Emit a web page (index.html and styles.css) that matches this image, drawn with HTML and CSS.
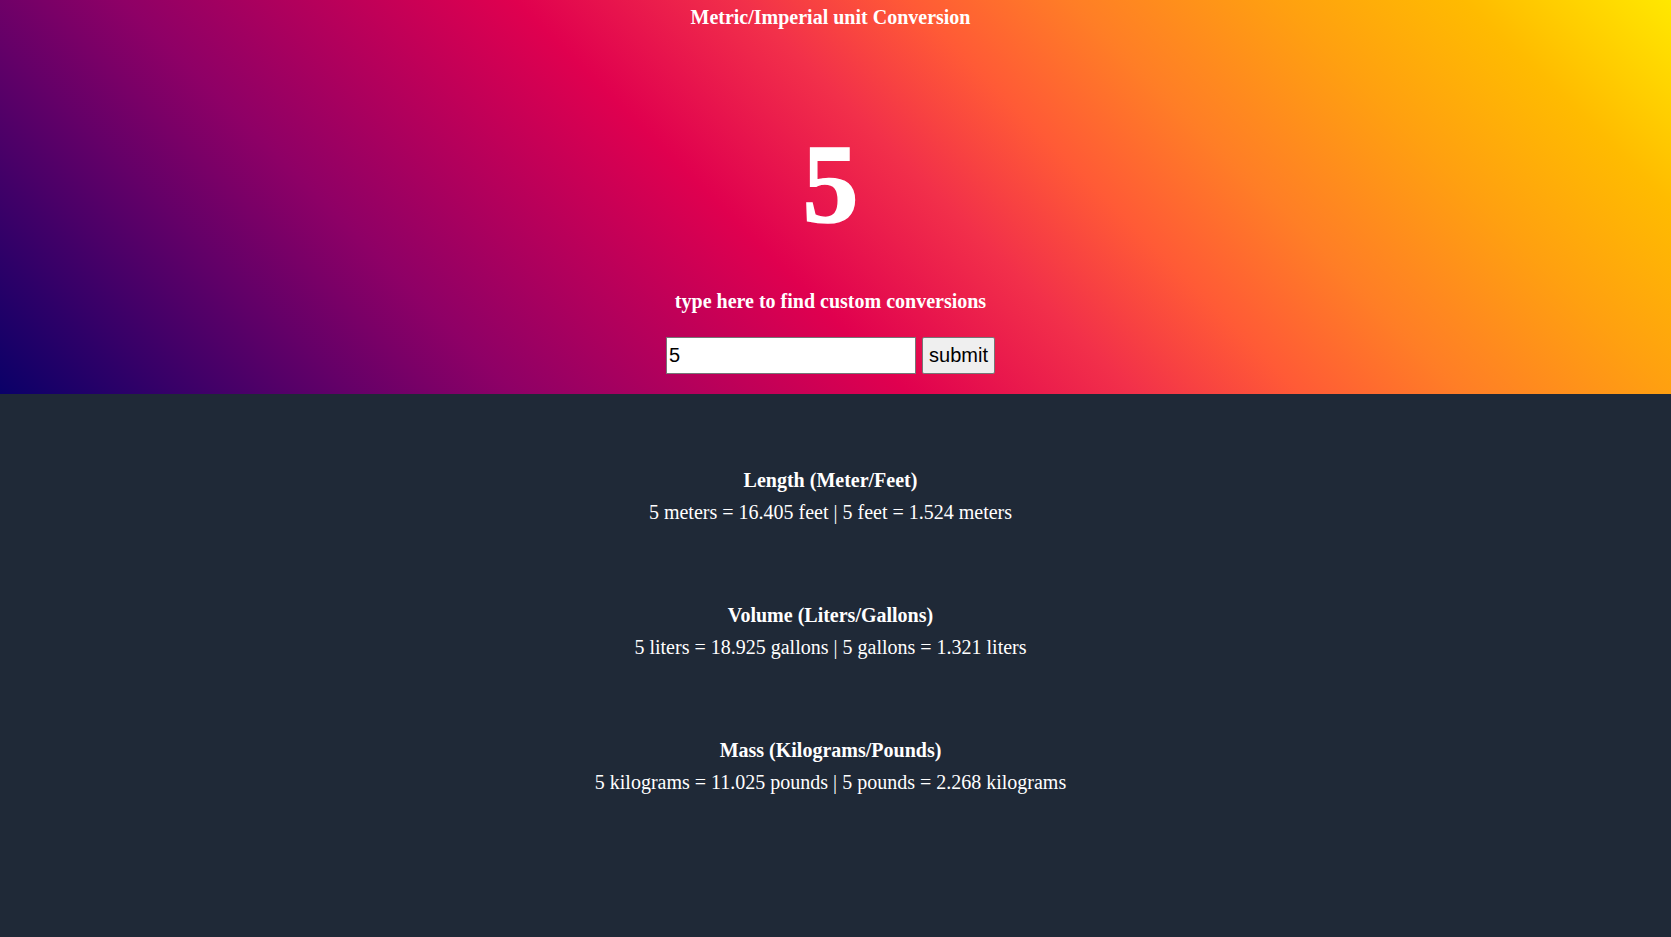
FILE: index.html
```html
<!DOCTYPE html>
<html lang="en">
<head>
<meta charset="utf-8">
<title>Metric/Imperial unit Conversion</title>
<link rel="stylesheet" href="styles.css">
</head>
<body>
<header class="hero">
  <h1 class="hero-title">Metric/Imperial unit Conversion</h1>
  <div class="hero-number">5</div>
  <p class="hero-hint">type here to find custom conversions</p>
  <form class="hero-form">
    <input class="hero-input" type="text" value="5">
    <button class="hero-button" type="button">submit</button>
  </form>
</header>
<main class="results">
  <section class="result">
    <h2 class="result-title">Length (Meter/Feet)</h2>
    <p class="result-text">5 meters = 16.405 feet | 5 feet = 1.524 meters</p>
  </section>
  <section class="result">
    <h2 class="result-title">Volume (Liters/Gallons)</h2>
    <p class="result-text">5 liters = 18.925 gallons | 5 gallons = 1.321 liters</p>
  </section>
  <section class="result">
    <h2 class="result-title">Mass (Kilograms/Pounds)</h2>
    <p class="result-text">5 kilograms = 11.025 pounds | 5 pounds = 2.268 kilograms</p>
  </section>
</main>
</body>
</html>
```
FILE: styles.css
```css
html, body {
  margin: 0;
  padding: 0;
}
body {
  background: #1f2937;
  color: #ffffff;
  font-family: "Liberation Serif", "Times New Roman", serif;
  height: 937px;
  overflow: hidden;
}
.hero {
  height: 394px;
  box-sizing: border-box;
  padding-right: 10px;
  display: flex;
  flex-direction: column;
  align-items: center;
  background: linear-gradient(45deg,
    #0a0068 0%,
    #640068 17%,
    #8e0066 25%,
    #e0004f 44%,
    #f2304a 55%,
    #ff5a36 63%,
    #ff7e26 71%,
    #ffa010 81%,
    #ffbb00 90%,
    #ffe800 100%);
}
.hero-title {
  margin: 5px 0 0;
  font-size: 20px;
  line-height: 24px;
  font-weight: bold;
}
.hero-number {
  margin-top: 99px;
  font-size: 112px;
  line-height: 112px;
  font-weight: bold;
  -webkit-text-stroke: 1.5px #ffffff;
}
.hero-hint {
  margin: 49px 0 0;
  font-size: 20px;
  line-height: 24px;
  font-weight: bold;
}
.hero-form {
  margin-top: 24px;
  display: flex;
  gap: 6px;
}
.hero-input {
  box-sizing: border-box;
  width: 250px;
  height: 37px;
  margin: 0;
  padding: 1px 2px;
  border: 1px solid #767676;
  background: #ffffff;
  color: #000000;
  font-family: "Liberation Sans", Arial, sans-serif;
  font-size: 20px;
}
.hero-button {
  box-sizing: border-box;
  height: 37px;
  margin: 0;
  padding: 1px 6px;
  border: 1px solid #767676;
  border-radius: 2px;
  background: #efefef;
  color: #000000;
  font-family: "Liberation Sans", Arial, sans-serif;
  font-size: 20px;
}
.results {
  padding-top: 75px;
  padding-right: 10px;
  display: flex;
  flex-direction: column;
  align-items: center;
  gap: 81px;
}
.result {
  display: flex;
  flex-direction: column;
  align-items: center;
  gap: 10px;
}
.result-title {
  margin: 0;
  font-size: 20px;
  line-height: 22px;
  font-weight: bold;
}
.result-text {
  margin: 0;
  font-size: 20px;
  line-height: 22px;
}
```
